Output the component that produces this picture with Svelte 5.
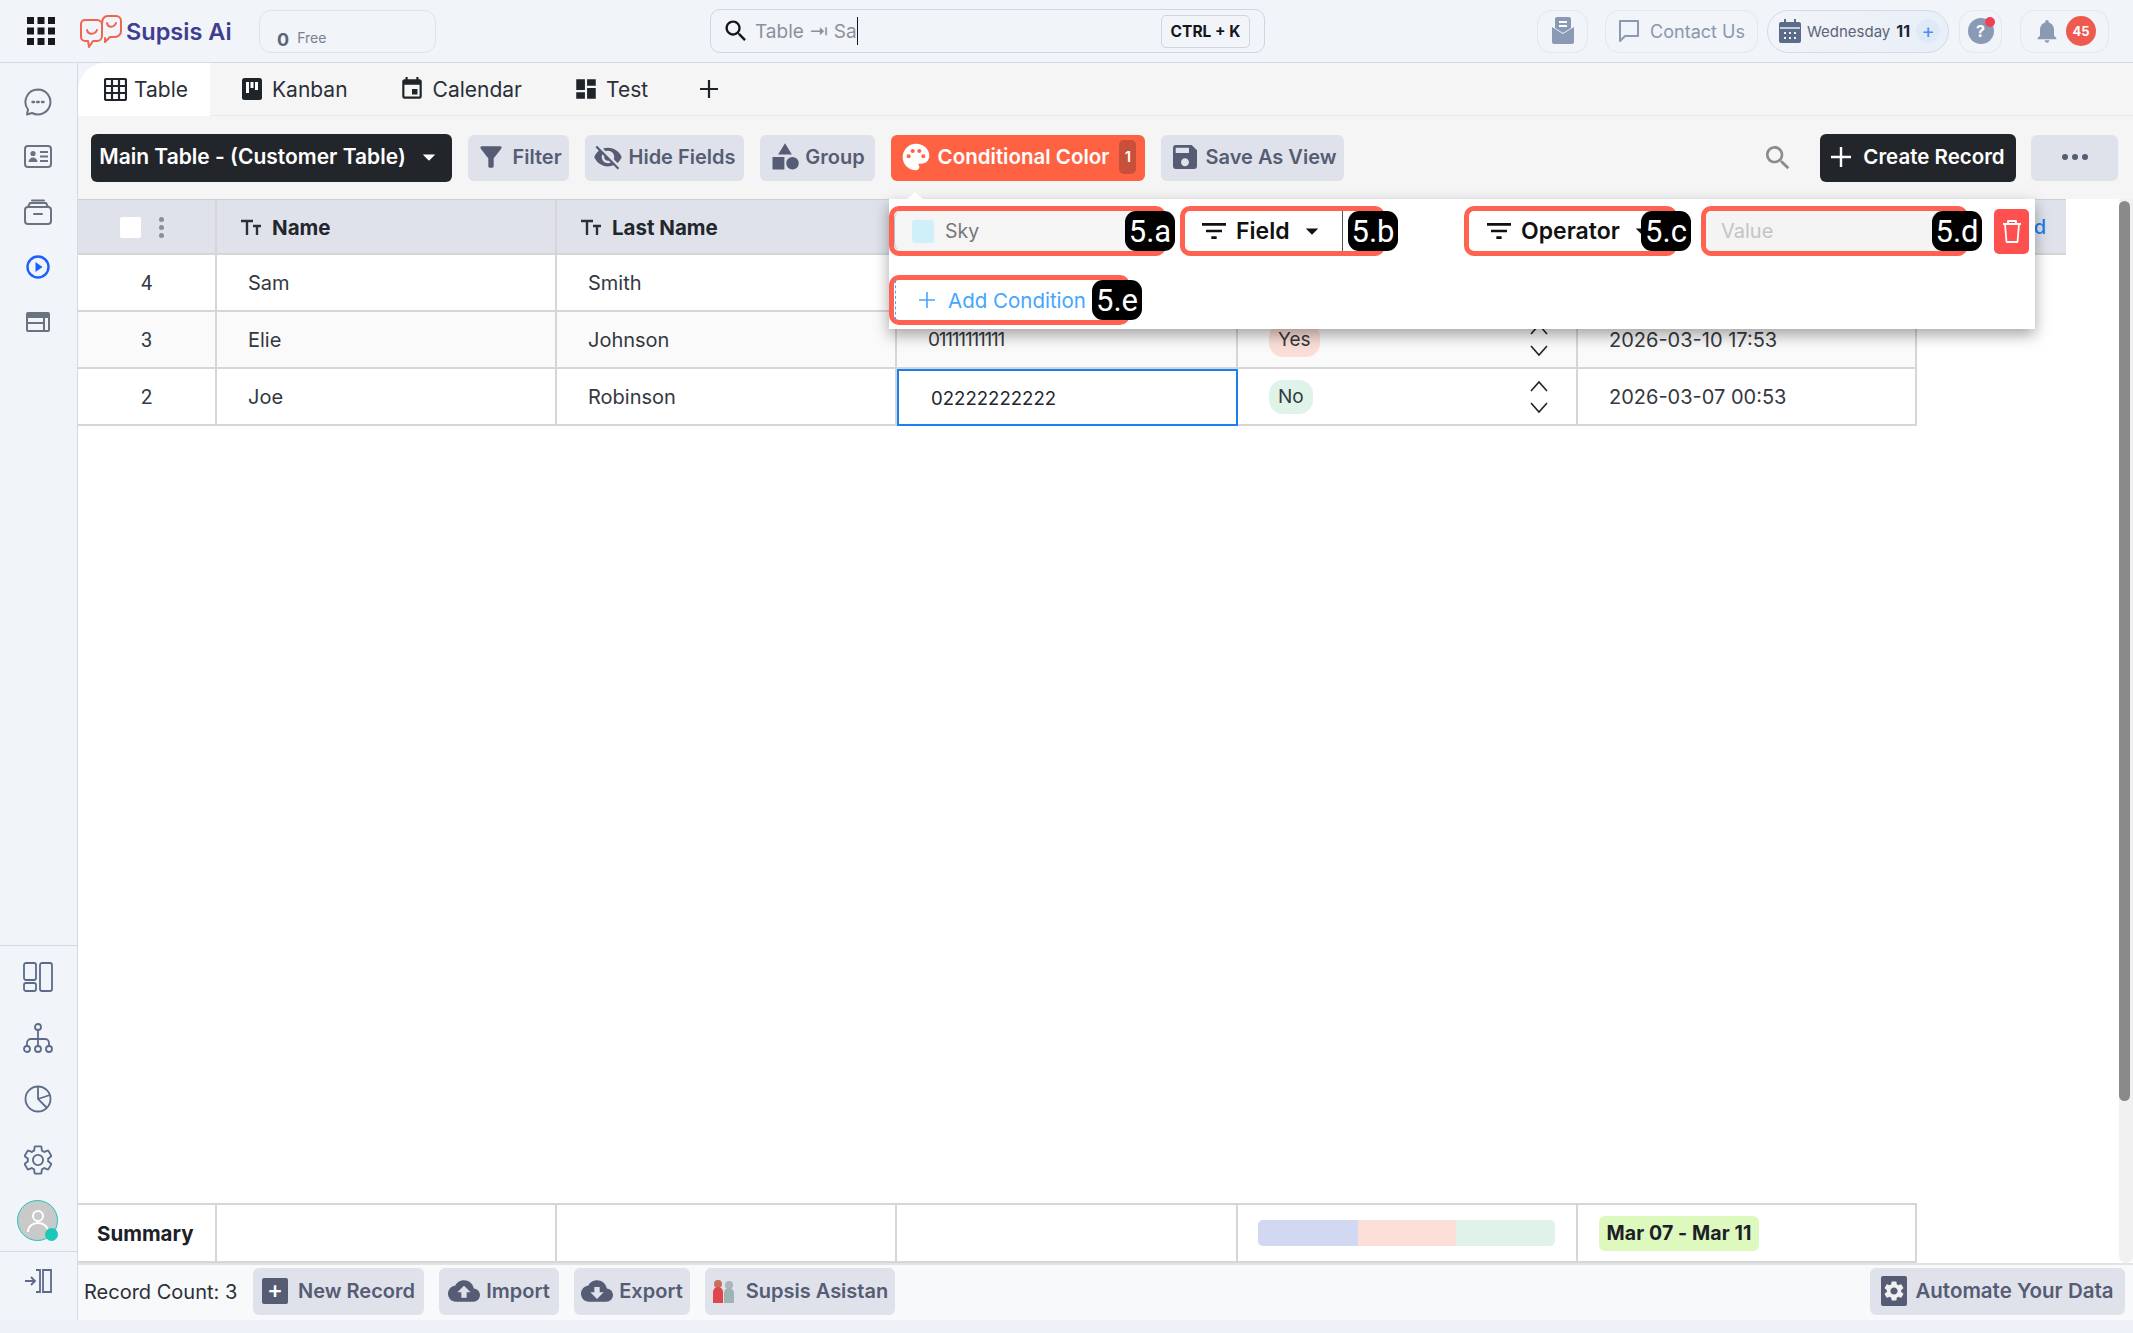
<script>
  const paths = {
    search: 'M15.5 14h-.79l-.28-.27C15.41 12.59 16 11.11 16 9.5 16 5.91 13.09 3 9.5 3S3 5.91 3 9.5 5.91 16 9.5 16c1.61 0 3.09-.59 4.23-1.57l.27.28v.79l5 4.99L20.49 19l-4.99-5zm-6 0C7.01 14 5 11.99 5 9.5S7.01 5 9.5 5 14 7.01 14 9.5 11.99 14 9.5 14z',
    caret: 'M7 10l5 5 5-5z',
    filterAlt: 'M4.25 5.61C6.27 8.2 10 13 10 13v6c0 .55.45 1 1 1h2c.55 0 1-.45 1-1v-6s3.72-4.8 5.74-7.39c.51-.66.04-1.61-.79-1.61H5.04c-.83 0-1.3.95-.79 1.61z',
    eyeOff: 'M12 7c2.76 0 5 2.24 5 5 0 .65-.13 1.26-.36 1.83l2.92 2.92c1.51-1.26 2.7-2.89 3.43-4.75-1.73-4.39-6-7.5-11-7.5-1.4 0-2.74.25-3.98.7l2.16 2.16C10.74 7.13 11.35 7 12 7zM2 4.27l2.28 2.28.46.46C3.08 8.3 1.78 10.02 1 12c1.73 4.39 6 7.5 11 7.5 1.55 0 3.03-.3 4.38-.84l.42.42L19.73 22 21 20.73 3.27 3 2 4.27zM7.53 9.8l1.55 1.55c-.05.21-.08.43-.08.65 0 1.66 1.34 3 3 3 .22 0 .44-.03.65-.08l1.55 1.55c-.67.33-1.41.53-2.2.53-2.76 0-5-2.24-5-5 0-.79.2-1.53.53-2.2z',
    shapes: 'M12 1l5.5 9h-11zM2 12h9.5v10H2zM18 12a5 5 0 1 1 0 10 5 5 0 0 1 0-10z',
    palette: 'M12 2C6.49 2 2 6.49 2 12s4.49 10 10 10c1.38 0 2.5-1.12 2.5-2.5 0-.61-.23-1.2-.64-1.67-.08-.1-.13-.21-.13-.33 0-.28.22-.5.5-.5H16c3.31 0 6-2.69 6-6 0-4.96-4.49-9-10-9zm-5.5 11c-.83 0-1.5-.67-1.5-1.5S5.67 10 6.5 10s1.5.67 1.5 1.5S7.33 13 6.5 13zm3-4C8.67 9 8 8.33 8 7.5S8.67 6 9.5 6s1.5.67 1.5 1.5S10.33 9 9.5 9zm5 0c-.83 0-1.5-.67-1.5-1.5S13.67 6 14.5 6s1.5.67 1.5 1.5S15.33 9 14.5 9zm3 4c-.83 0-1.5-.67-1.5-1.5s.67-1.5 1.5-1.5 1.5.67 1.5 1.5-.67 1.5-1.5 1.5z',
    save: 'M17 3H5c-1.11 0-2 .9-2 2v14c0 1.1.89 2 2 2h14c1.1 0 2-.9 2-2V7l-4-4zm-5 16c-1.66 0-3-1.34-3-3s1.34-3 3-3 3 1.34 3 3-1.34 3-3 3zm3-10H5V5h10v4z',
    filterList: 'M10 18h4v-2h-4v2zM3 6v2h18V6H3zm3 7h12v-2H6v2z',
    event: 'M17 12h-5v5h5v-5zM16 1v2H8V1H6v2H5c-1.11 0-1.99.9-1.99 2L3 19c0 1.1.89 2 2 2h14c1.1 0 2-.9 2-2V5c0-1.1-.9-2-2-2h-1V1h-2zm3 18H5V8h14v11z',
    dashboard: 'M3 13h8V3H3v10zm0 8h8v-6H3v6zm10 0h8V11h-8v10zm0-18v6h8V3h-8z',
    upload: 'M19.35 10.04C18.67 6.59 15.64 4 12 4 9.11 4 6.6 5.64 5.35 8.04 2.34 8.36 0 10.91 0 14c0 3.31 2.69 6 6 6h13c2.76 0 5-2.24 5-5 0-2.64-2.05-4.78-4.65-4.96zM14 13v4h-4v-4H7l5-5 5 5h-3z',
    download: 'M19.35 10.04C18.67 6.59 15.64 4 12 4 9.11 4 6.6 5.64 5.35 8.04 2.34 8.36 0 10.91 0 14c0 3.31 2.69 6 6 6h13c2.76 0 5-2.24 5-5 0-2.64-2.05-4.78-4.65-4.96zM17 13l-5 5-5-5h3V9h4v4h3z',
    bell: 'M12 22c1.1 0 2-.9 2-2h-4c0 1.1.9 2 2 2zm6-6v-5c0-3.07-1.63-5.64-4.5-6.32V4c0-.83-.67-1.5-1.5-1.5s-1.5.67-1.5 1.5v.68C7.64 5.36 6 7.92 6 11v5l-2 2v1h16v-1l-2-2z',
    gear: 'M19.14 12.94c.04-.3.06-.61.06-.94 0-.32-.02-.64-.07-.94l2.03-1.58c.18-.14.23-.41.12-.61l-1.92-3.32c-.12-.22-.37-.29-.59-.22l-2.39.96c-.5-.38-1.03-.7-1.62-.94l-.36-2.54c-.04-.24-.24-.41-.48-.41h-3.84c-.24 0-.43.17-.47.41l-.36 2.54c-.59.24-1.13.57-1.62.94l-2.39-.96c-.22-.08-.47 0-.59.22L2.74 8.87c-.12.21-.08.47.12.61l2.03 1.58c-.05.3-.09.63-.09.94s.02.64.07.94l-2.03 1.58c-.18.14-.23.41-.12.61l1.92 3.32c.12.22.37.29.59.22l2.39-.96c.5.38 1.03.7 1.62.94l.36 2.54c.05.24.24.41.48.41h3.84c.24 0 .44-.17.47-.41l.36-2.54c.59-.24 1.13-.56 1.62-.94l2.39.96c.22.08.47 0 .59-.22l1.92-3.32c.12-.22.07-.47-.12-.61l-2.01-1.58zM12 15.6c-1.98 0-3.6-1.62-3.6-3.6s1.62-3.6 3.6-3.6 3.6 1.62 3.6 3.6-1.62 3.6-3.6 3.6z'
  };

  const rows = [
    { id: 4, name: 'Sam', last: 'Smith', phone: '', choice: '', date: '' },
    { id: 3, name: 'Elie', last: 'Johnson', phone: '01111111111', choice: 'Yes', date: '2026-03-10 17:53' },
    { id: 2, name: 'Joe', last: 'Robinson', phone: '02222222222', choice: 'No', date: '2026-03-07 00:53' }
  ];
</script>

{#snippet icon(d, size = 24)}
  <svg class="ico" width={size} height={size} viewBox="0 0 24 24" fill="currentColor"><path {d} /></svg>
{/snippet}

{#snippet typeIcon()}
  <svg class="type-ico" width="22" height="20" viewBox="0 0 22 20" fill="none" stroke="currentColor" stroke-width="2.4">
    <path d="M1 3h12M7 3v14M13 8h8M17 8v9" />
  </svg>
{/snippet}

<div class="app">
  <header class="topbar">
    <svg class="apps" width="28" height="28" viewBox="0 0 28 28" fill="#16181d">
      {#each [0, 10.5, 21] as y}
        {#each [0, 10.5, 21] as x}
          <rect {x} {y} width="7" height="7" />
        {/each}
      {/each}
    </svg>
    <div class="logo">
      <svg width="44" height="34" viewBox="0 0 44 34" fill="none" stroke="#f0654f" stroke-width="2" stroke-linecap="round" stroke-linejoin="round">
        <path d="M6 6h12a5 5 0 0 1 5 5v11a5 5 0 0 1-5 5h-4l-4 6-1-6H6a4 4 0 0 1-4-4V10a4 4 0 0 1 4-4z" />
        <path d="M23 10c0-5 2-8 6-8h8a5 5 0 0 1 5 5v10a6 6 0 0 1-6 6h-5l-5 5v-4" />
        <path d="M8 16c1 5 8 5 10 0M28 9c1 5 7 5 9 0" />
      </svg>
      <span class="logo-text">Supsis Ai</span>
    </div>
    <div class="credit"><b>0</b><span>Free</span></div>
    <div class="search">
      <span class="search-ico">{@render icon(paths.search, 28)}</span>
      <span class="search-text">Table ⇥ Sa</span><span class="caret-line"></span>
      <span class="kbd">CTRL + K</span>
    </div>
    <div class="top-right">
      <div class="chip mail">
        <svg width="26" height="30" viewBox="0 0 26 30" fill="#8a9ab5">
          <path d="M7 1h12a2 2 0 0 1 2 2v9l-8 5-8-5V3a2 2 0 0 1 2-2z" />
          <path d="M2 11l11 7 11-7v15a2 2 0 0 1-2 2H4a2 2 0 0 1-2-2z" />
          <path d="M9 6h8M9 10h8" stroke="#fff" stroke-width="2" />
        </svg>
      </div>
      <div class="chip contact">
        <svg width="22" height="24" viewBox="0 0 22 24" fill="none" stroke="#8a9ab5" stroke-width="2"><path d="M2 2h18v15H7l-5 5z" stroke-linejoin="round" /></svg>
        <span>Contact Us</span>
      </div>
      <div class="chip day">
        <svg width="22" height="26" viewBox="0 0 22 26" fill="#5d6b8a">
          <path d="M5 1h2v3h8V1h2v3h3a2 2 0 0 1 2 2v17a2 2 0 0 1-2 2H2a2 2 0 0 1-2-2V6a2 2 0 0 1 2-2h3z" />
          <path d="M1 10h20" stroke="#edf1f8" stroke-width="1.5" />
          <path d="M5 14h2v2H5zM10 14h2v2h-2zM15 14h2v2h-2zM5 19h2v2H5zM10 19h2v2h-2zM15 19h2v2h-2z" fill="#edf1f8" />
        </svg>
        <span class="day-name">Wednesday</span><b>11</b>
        <span class="day-plus">+</span>
      </div>
      <div class="chip help">
        <span class="help-ico">?</span><span class="help-dot"></span>
      </div>
      <div class="chip bell">
        <span class="bell-ico">{@render icon(paths.bell, 28)}</span>
        <span class="count">45</span>
      </div>
    </div>
  </header>

  <div class="body">
    <aside class="sidebar">
      <nav class="side-top">
        <div class="side-item">
          <svg width="28" height="28" viewBox="0 0 28 28" fill="none" stroke="#6b7280" stroke-width="2">
            <path d="M14 1.5a12.5 12.5 0 1 1-6 23.5l-5 1.5 1-5A12.5 12.5 0 0 1 14 1.5z" stroke-linejoin="round" />
            <path d="M8.5 14h1.5M13.2 14h1.5M18 14h1.5" stroke-width="2.4" stroke-linecap="round" />
          </svg>
        </div>
        <div class="side-item">
          <svg width="28" height="23" viewBox="0 0 28 23" fill="none" stroke="#6b7280" stroke-width="2">
            <rect x="1" y="1" width="26" height="21" rx="3" />
            <circle cx="9" cy="8.5" r="2.6" fill="#6b7280" stroke="none" />
            <path d="M4.5 17c.4-6 8.6-6 9 0z" fill="#6b7280" stroke="none" />
            <path d="M16 7h8M16 11.5h8M16 16h8" />
          </svg>
        </div>
        <div class="side-item">
          <svg width="28" height="26" viewBox="0 0 28 26" fill="none" stroke="#6b7280" stroke-width="2">
            <rect x="1" y="8" width="26" height="17" rx="3" />
            <path d="M4 8l2-4h16l2 4M8 1.5h12M10 15h8" stroke-linecap="round" />
          </svg>
        </div>
        <div class="side-item">
          <svg width="24" height="24" viewBox="0 0 24 24" fill="none" stroke="#1a5fff" stroke-width="2.4">
            <circle cx="12" cy="12" r="10.5" />
            <path d="M9.5 7l7 5-7 5z" fill="#1a5fff" stroke="none" />
          </svg>
        </div>
        <div class="side-item">
          <svg width="24" height="20" viewBox="0 0 24 20" fill="#6b7280">
            <path fill-rule="evenodd" d="M2 0h20a2 2 0 0 1 2 2v16a2 2 0 0 1-2 2H2a2 2 0 0 1-2-2V2a2 2 0 0 1 2-2zm0 6v4h15V6zm0 6v6h15v-6zm17-6v12h3V6z" />
          </svg>
        </div>
      </nav>
      <div class="side-bottom">
        <div class="side-item tall">
          <svg width="30" height="30" viewBox="0 0 30 30" fill="none" stroke="#5d6b8a" stroke-width="1.8">
            <rect x="1" y="1" width="12" height="17" rx="2" />
            <rect x="1" y="21" width="12" height="8" rx="2" />
            <rect x="17" y="1" width="12" height="28" rx="2" />
          </svg>
        </div>
        <div class="side-item tall">
          <svg width="30" height="30" viewBox="0 0 30 30" fill="none" stroke="#5d6b8a" stroke-width="1.8">
            <circle cx="15" cy="4" r="3" />
            <circle cx="4" cy="26" r="3" />
            <circle cx="15" cy="26" r="3" />
            <circle cx="26" cy="26" r="3" />
            <path d="M15 7v16M4 23v-3a4 4 0 0 1 4-4h14a4 4 0 0 1 4 4v3" />
          </svg>
        </div>
        <div class="side-item tall">
          <svg width="28" height="28" viewBox="0 0 28 28" fill="none" stroke="#5d6b8a" stroke-width="1.8">
            <circle cx="14" cy="14" r="12.5" />
            <path d="M14 1.5V14l9 9M14 14l12-4" />
          </svg>
        </div>
        <div class="side-item tall gear">
          <svg width="34" height="34" viewBox="0 0 24 24" fill="none" stroke="#5d6b8a" stroke-width="1.3"><path d={paths.gear} /></svg>
        </div>
        <div class="side-item tall">
          <div class="avatar">
            <svg width="22" height="24" viewBox="0 0 22 24" fill="none" stroke="#fff" stroke-width="2"><circle cx="11" cy="7" r="5" /><path d="M1 23c0-12 20-12 20 0" /></svg>
            <span class="online"></span>
          </div>
        </div>
        <div class="side-exit">
          <svg width="28" height="24" viewBox="0 0 28 24" fill="none" stroke="#5d6b8a" stroke-width="1.8">
            <path d="M1 12h9M7 8l4 4-4 4M12 1h4v22h-4M19 1h8v22h-8z" />
          </svg>
        </div>
      </div>
    </aside>

    <main class="main">
      <div class="tabs">
        <div class="tab active">
          <svg width="23" height="23" viewBox="0 0 23 23" fill="none" stroke="#1f232a" stroke-width="2.2"><rect x="1" y="1" width="21" height="21" rx="1.5" /><path d="M8 1v21M15 1v21M1 8h21M1 15h21" /></svg>
          <span>Table</span>
        </div>
        <div class="tab">
          <svg width="20" height="22" viewBox="0 0 20 22" fill="#1f232a"><rect width="20" height="22" rx="2.5" /><path d="M4 4h3v11H4zM8.5 4h3v6h-3zM13 4h3v8h-3z" fill="#fff" /></svg>
          <span>Kanban</span>
        </div>
        <div class="tab">
          <span class="tab-ico">{@render icon(paths.event, 26)}</span>
          <span>Calendar</span>
        </div>
        <div class="tab">
          <span class="tab-ico">{@render icon(paths.dashboard, 26)}</span>
          <span>Test</span>
        </div>
        <svg class="tab-add" width="18" height="18" viewBox="0 0 18 18" stroke="#1f232a" stroke-width="2.2"><path d="M9 0v18M0 9h18" /></svg>
      </div>

      <div class="toolbar">
        <button class="btn dark main-table"><span>Main Table - (Customer Table)</span>{@render icon(paths.caret, 30)}</button>
        <button class="btn filter">{@render icon(paths.filterAlt, 32)}<span>Filter</span></button>
        <button class="btn hide">{@render icon(paths.eyeOff, 30)}<span>Hide Fields</span></button>
        <button class="btn group">{@render icon(paths.shapes, 30)}<span>Group</span></button>
        <button class="btn accent">{@render icon(paths.palette, 32)}<span>Conditional Color</span><i class="badge">1</i></button>
        <button class="btn save">{@render icon(paths.save, 32)}<span>Save As View</span></button>
        <span class="tool-search">{@render icon(paths.search, 32)}</span>
        <button class="btn dark create">
          <svg width="20" height="20" viewBox="0 0 20 20" stroke="#fff" stroke-width="2.4"><path d="M10 0v20M0 10h20" /></svg>
          <span>Create Record</span>
        </button>
        <button class="btn more"><i></i><i></i><i></i></button>
      </div>

      <div class="content">
        <div class="sheet">
          <div class="row head">
            <div class="cell check"><span class="box"></span><span class="kebab"><i></i><i></i><i></i></span></div>
            <div class="cell">{@render typeIcon()}Name</div>
            <div class="cell">{@render typeIcon()}Last Name</div>
            <div class="cell"></div>
            <div class="cell"></div>
            <div class="cell"></div>
            <div class="cell add-field">Add Field</div>
          </div>
          {#each rows as r, i}
            <div class="row data" class:alt={i === 1}>
              <div class="cell num">{r.id}</div>
              <div class="cell">{r.name}</div>
              <div class="cell">{r.last}</div>
              <div class="cell" class:selected={i === 2} class:tight={i === 1}>{r.phone}</div>
              <div class="cell pick">
                {#if r.choice}
                  <span class="pill" class:no={r.choice === 'No'}>{r.choice}</span>
                  <svg class="updown" width="20" height="36" viewBox="0 0 20 36" fill="none" stroke="#222" stroke-width="1.6"><path d="M2 12l8-9 8 9M2 24l8 9 8-9" /></svg>
                {/if}
              </div>
              <div class="cell">{r.date}</div>
            </div>
          {/each}
          <div class="spacer"></div>
          <div class="row summary">
            <div class="cell sum-label">Summary</div>
            <div class="cell"></div>
            <div class="cell"></div>
            <div class="cell"></div>
            <div class="cell"><div class="bar"><i class="b1"></i><i class="b2"></i><i class="b3"></i></div></div>
            <div class="cell"><span class="range">Mar 07 - Mar 11</span></div>
          </div>
        </div>
        <div class="scrollbar"><span class="thumb"></span></div>
      </div>

      <footer class="footer">
        <span class="record-count">Record Count: 3</span>
        <button class="btn foot new">
          <span class="plus-box">+</span><span>New Record</span>
        </button>
        <button class="btn foot import">{@render icon(paths.upload, 32)}<span>Import</span></button>
        <button class="btn foot export">{@render icon(paths.download, 32)}<span>Export</span></button>
        <button class="btn foot asistan">
          <svg width="24" height="28" viewBox="0 0 24 28">
            <circle cx="6" cy="7" r="4" fill="#c9705c" />
            <path d="M1 26V15a5 5 0 0 1 10 0v11z" fill="#e0474c" />
            <circle cx="17" cy="8" r="4" fill="#aab4bd" />
            <path d="M12 26V16a5 5 0 0 1 10 0v10z" fill="#9fb3b5" />
          </svg>
          <span>Supsis Asistan</span>
        </button>
        <button class="btn foot automate">
          <span class="gear-box">{@render icon(paths.gear, 24)}</span><span>Automate Your Data</span>
        </button>
      </footer>

      <!-- conditional color popover, sits over the table -->
      <div class="popover">
        <span class="arrow"></span>
        <div class="pop-row">
          <div class="mark w-a">
            <div class="color-input"><span class="swatch"></span><span>Sky</span></div>
            <span class="tag">5.a</span>
          </div>
          <div class="mark w-b">
            <div class="select field">{@render icon(paths.filterList, 32)}<span>Field</span>{@render icon(paths.caret, 30)}</div>
            <span class="tag">5.b</span>
          </div>
          <div class="mark w-c">
            <div class="select">{@render icon(paths.filterList, 32)}<span>Operator</span>{@render icon(paths.caret, 30)}</div>
            <span class="tag">5.c</span>
          </div>
          <div class="mark w-d">
            <div class="value">Value</div>
            <span class="tag">5.d</span>
          </div>
          <button class="trash">
            <svg width="20" height="24" viewBox="0 0 20 24" fill="none" stroke="#fff" stroke-width="1.8"><path d="M1 5h18M6 5V2h8v3M3 5l1.5 18h11L17 5" stroke-linejoin="round" /></svg>
          </button>
        </div>
        <div class="mark w-e">
          <div class="add-cond">
            <svg width="16" height="16" viewBox="0 0 16 16" stroke="#45a5ff" stroke-width="1.6"><path d="M8 0v16M0 8h16" /></svg>
            <span>Add Condition</span>
          </div>
          <span class="tag">5.e</span>
        </div>
      </div>
    </main>
  </div>
</div>

<style>
  :global(body) {
    margin: 0;
    background: #eef0f7;
  }

  .app {
    height: 1333px;
    width: 2133px;
    overflow: hidden;
    font-family: Inter, "Noto Sans", sans-serif;
    color: #2b2f38;
    background: #eef0f7;
  }

  .ico {
    display: block;
    flex-shrink: 0;
  }

  button {
    font: inherit;
    border: none;
    cursor: pointer;
  }

  .topbar {
    height: 63px;
    box-sizing: border-box;
    background: #f1f4f8;
    border-bottom: 1px solid #d3dae3;
    display: flex;
    align-items: center;
    padding-left: 27px;
  }

  .apps {
    flex-shrink: 0;
  }

  .logo {
    display: flex;
    align-items: center;
    margin-left: 24px;
    gap: 3px;
    width: 180px;
    flex-shrink: 0;
  }

  .logo-text {
    font-size: 23.5px;
    font-weight: 600;
    color: #3f3d8f;
    white-space: nowrap;
  }

  .credit {
    width: 177px;
    height: 43px;
    box-sizing: border-box;
    border: 1px solid #dfe3ea;
    border-radius: 12px;
    padding: 13px 0 0 17px;
    display: flex;
    gap: 8px;
    align-items: center;
  }

  .credit b {
    font-size: 18px;
    color: #5d6478;
    margin-top: 4px;
  }

  .credit span {
    font-size: 14px;
    color: #7a818f;
  }

  .search {
    width: 555px;
    height: 44px;
    box-sizing: border-box;
    margin-left: 274px;
    border: 1px solid #cfd6e0;
    border-radius: 10px;
    display: flex;
    align-items: center;
    padding-left: 11px;
  }

  .search-ico {
    color: #14161a;
  }

  .search-text {
    margin-left: 5px;
    font-size: 19px;
    color: #8b919c;
  }

  .caret-line {
    width: 1px;
    height: 28px;
    background: #14161a;
    margin-left: 0;
  }

  .kbd {
    margin-left: auto;
    margin-right: 14px;
    width: 89px;
    height: 33px;
    box-sizing: border-box;
    border: 1px solid #cfd6e0;
    border-radius: 5px;
    font-size: 15.5px;
    font-weight: 700;
    color: #14161a;
    display: flex;
    align-items: center;
    justify-content: center;
    white-space: nowrap;
  }

  .top-right {
    display: flex;
    align-items: center;
    margin-left: 272px;
  }

  .chip {
    height: 43px;
    box-sizing: border-box;
    border: 1px solid #e3e8ef;
    border-radius: 14px;
    display: flex;
    align-items: center;
    justify-content: center;
    position: relative;
  }

  .mail {
    width: 51px;
  }

  .contact {
    width: 153px;
    margin-left: 17px;
    gap: 10px;
    font-size: 18px;
    color: #8a97ad;
  }

  .day {
    width: 182px;
    margin-left: 9px;
    border-radius: 22px;
    border-color: #d3dae6;
    background: linear-gradient(90deg, #f1f4f8, #e9eff8);
    font-size: 15px;
    color: #5b6478;
    justify-content: flex-start;
    padding-left: 11px;
    gap: 6px;
  }

  .day b {
    color: #1d2230;
    font-size: 16px;
  }

  .day-plus {
    width: 24px;
    height: 24px;
    border-radius: 50%;
    background: #dfe9f8;
    color: #4a8ef0;
    font-size: 20px;
    display: flex;
    align-items: center;
    justify-content: center;
    margin-left: 0;
  }

  .help {
    width: 43px;
    margin-left: 10px;
  }

  .help-ico {
    width: 26px;
    height: 26px;
    border-radius: 50%;
    background: #8a9ab5;
    color: #fff;
    font-size: 16px;
    font-weight: 700;
    display: flex;
    align-items: center;
    justify-content: center;
  }

  .help-dot {
    position: absolute;
    right: 6px;
    top: 6px;
    width: 10px;
    height: 10px;
    border-radius: 50%;
    background: #ef4056;
  }

  .bell {
    width: 89px;
    margin-left: 18px;
    gap: 5px;
  }

  .bell-ico {
    color: #8a9ab5;
  }

  .count {
    width: 30px;
    height: 30px;
    border-radius: 50%;
    background: #ef5a50;
    color: #fff;
    font-size: 13px;
    font-weight: 700;
    display: flex;
    align-items: center;
    justify-content: center;
  }

  .body {
    height: 1257px;
    display: flex;
    background: #f1f4f8;
  }

  .sidebar {
    width: 78px;
    flex-shrink: 0;
    box-sizing: border-box;
    border-right: 1px solid #d3dae3;
    display: flex;
    flex-direction: column;
    justify-content: space-between;
    padding-bottom: 2px;
  }

  .side-top {
    padding-top: 11px;
  }

  .side-item {
    height: 55px;
    display: flex;
    align-items: center;
    justify-content: center;
    padding-right: 2px;
  }

  .side-item.tall {
    height: 61px;
  }

  .side-bottom {
    border-top: 1px solid #d3dae3;
  }

  .side-exit {
    height: 67px;
    box-sizing: border-box;
    border-top: 1px solid #d3dae3;
    display: flex;
    justify-content: center;
    padding: 17px 2px 0 0;
  }

  .avatar {
    width: 41px;
    height: 41px;
    box-sizing: border-box;
    border: 1px solid #1cc8bb;
    border-radius: 50%;
    background: #c9c9c9;
    display: flex;
    align-items: center;
    justify-content: center;
    position: relative;
  }

  .online {
    position: absolute;
    right: -1px;
    bottom: -1px;
    width: 13px;
    height: 13px;
    border-radius: 50%;
    background: #1cc8bb;
  }

  .main {
    flex: 1;
    min-width: 0;
    position: relative;
    display: flex;
    flex-direction: column;
    background: #fff;
    border-top-left-radius: 28px;
  }

  .tabs {
    height: 53px;
    box-sizing: border-box;
    flex-shrink: 0;
    background: #f5f5f5;
    border-bottom: 1px solid #e9e9e9;
    border-top-left-radius: 28px;
    display: flex;
    align-items: stretch;
  }

  .tab {
    display: flex;
    align-items: center;
    gap: 8px;
    font-size: 21px;
    color: #2b2f38;
    margin-right: 45px;
    padding-left: 6px;
  }

  .tab:nth-child(2) {
    margin-left: 26px;
    gap: 10px;
  }

  .tab:nth-child(4) {
    margin-right: 28px;
    gap: 7px;
  }

  .tab.active {
    width: 132px;
    box-sizing: border-box;
    background: #fff;
    padding-left: 26px;
    gap: 7px;
    margin: 0 0 -1px 0;
    border-top-left-radius: 28px;
  }

  .tab-ico {
    color: #1f232a;
  }

  .tab-add {
    align-self: center;
    margin-left: 24px;
  }

  .toolbar {
    height: 83px;
    flex-shrink: 0;
    box-sizing: border-box;
    background: #f5f5f5;
    display: flex;
    align-items: center;
    padding: 0 15px 0 13px;
    gap: 16px;
  }

  .btn {
    height: 46px;
    box-sizing: border-box;
    border-radius: 6px;
    background: #dfe2ea;
    color: #555c74;
    font-size: 20px;
    font-weight: 600;
    display: flex;
    align-items: center;
    justify-content: center;
    gap: 5px;
    padding: 0 0 2px 0;
    white-space: nowrap;
  }

  .btn.dark {
    height: 48px;
    background: #22262b;
    color: #fff;
  }

  .main-table {
    width: 361px;
    gap: 8px;
    font-size: 21px;
  }

  .filter {
    width: 101px;
  }

  .hide {
    width: 159px;
  }

  .group {
    width: 115px;
  }

  .accent {
    width: 254px;
    background: #ff6243;
    color: #fff;
    gap: 6px;
    font-size: 20.5px;
  }

  .badge {
    font-style: normal;
    width: 17px;
    height: 34px;
    border-radius: 5px;
    background: #c84f38;
    font-size: 15px;
    display: flex;
    align-items: center;
    justify-content: center;
    margin-left: 4px;
  }

  .save {
    width: 183px;
  }

  .tool-search {
    margin-left: auto;
    color: #8b8b8b;
    margin-right: 10px;
  }

  .create {
    width: 196px;
    gap: 12px;
    font-size: 20.5px;
  }

  .more {
    width: 87px;
    gap: 4px;
    margin-left: -1px;
  }

  .more i {
    width: 6px;
    height: 6px;
    border-radius: 50%;
    background: #555c74;
  }

  .content {
    flex: 1;
    min-height: 0;
    display: flex;
    background: #fff;
  }

  .sheet {
    flex: 1;
    display: flex;
    flex-direction: column;
    min-width: 0;
    border-top: 1px solid #cfcfcf;
    margin-right: 53px;
  }

  .row {
    display: grid;
    grid-template-columns: 139px 340px 340px 341px 340px 339px;
    flex-shrink: 0;
  }

  .row.head {
    grid-template-columns: 139px 340px 340px 341px 340px 339px 149px;
    height: 55px;
    background: #dfe2ea;
    font-size: 20.5px;
    font-weight: 700;
    color: #23262d;
  }

  .row.data {
    height: 57px;
    font-size: 20px;
    color: #34383f;
    width: 1839px;
  }

  .row.alt {
    background: #fafafa;
  }

  .cell {
    box-sizing: border-box;
    border-right: 2px solid #d6d6d6;
    border-bottom: 2px solid #d6d6d6;
    display: flex;
    align-items: center;
    padding-left: 31px;
    white-space: nowrap;
  }

  .head .cell {
    padding: 2px 0 0 23px;
    gap: 10px;
  }

  .head .cell.check {
    padding-left: 42px;
    gap: 18px;
  }

  .head .cell.add-field {
    border-right: none;
    color: #1a7ff0;
    font-weight: 500;
    justify-content: flex-end;
    padding: 0 20px 0 0;
    font-size: 20px;
  }

  .type-ico {
    color: #2b2f38;
    flex-shrink: 0;
  }

  .box {
    width: 21px;
    height: 21px;
    background: #fff;
    border-radius: 2px;
  }

  .kebab {
    display: flex;
    flex-direction: column;
    gap: 3px;
  }

  .kebab i {
    width: 5px;
    height: 5px;
    border-radius: 50%;
    background: #8a8e9a;
  }

  .cell.num {
    justify-content: center;
    padding: 0;
    font-family: Roboto, sans-serif;
    font-size: 20px;
  }

  .cell.selected {
    border: 2px solid #1a7ff0;
    padding-left: 32px;
    color: #23262d;
    font-size: 18.6px;
  }

  .cell.tight {
    letter-spacing: -1.2px;
    font-size: 19px;
  }

  .cell.pick {
    position: relative;
  }

  .pill {
    background: #fbded7;
    border-radius: 14px;
    padding: 5px 9px;
    line-height: 24px;
    font-size: 19px;
  }

  .pill.no {
    background: #dff3e8;
  }

  .updown {
    position: absolute;
    right: 27px;
    top: 10px;
  }

  .spacer {
    flex: 1;
  }

  .row.summary {
    height: 58px;
    border-top: 2px solid #d6d6d6;
    font-size: 20.5px;
    width: 1839px;
  }

  .sum-label {
    font-weight: 700;
    color: #1d2027;
    padding-left: 19px;
  }

  .bar {
    width: 297px;
    height: 26px;
    margin-left: -11px;
    border-radius: 5px;
    overflow: hidden;
    display: flex;
  }

  .b1 {
    width: 100px;
    background: #d3d8f2;
  }

  .b2 {
    width: 98px;
    background: #fbded7;
  }

  .b3 {
    flex: 1;
    background: #dff3e8;
  }

  .range {
    margin-left: -10px;
    background: #ddf9bd;
    border-radius: 6px;
    height: 35px;
    width: 160px;
    display: flex;
    align-items: center;
    justify-content: center;
    font-weight: 700;
    color: #1d2027;
    font-size: 19.5px;
    letter-spacing: 0.1px;
  }

  .scrollbar {
    width: 14px;
    background: #f1f1f1;
    flex-shrink: 0;
    border-radius: 0 0 7px 7px;
  }

  .thumb {
    display: block;
    width: 11px;
    margin: 2px 0 0 0;
    height: 900px;
    border-radius: 6px;
    background: #8a8a8a;
  }

  .footer {
    height: 57px;
    flex-shrink: 0;
    box-sizing: border-box;
    background: #f8f9fb;
    border-top: 2px solid #e3e3e3;
    display: flex;
    align-items: center;
    padding: 0 8px 2px 6px;
  }

  .record-count {
    font-size: 20px;
    color: #2b2f38;
    width: 169px;
    white-space: nowrap;
  }

  .foot {
    height: 47px;
    gap: 6px;
  }

  .new {
    width: 171px;
    gap: 10px;
  }

  .plus-box {
    width: 26px;
    height: 26px;
    border-radius: 2px;
    background: #555c74;
    color: #fff;
    font-size: 24px;
    font-weight: 500;
    line-height: 24px;
    text-align: center;
  }

  .import {
    width: 120px;
    margin-left: 15px;
  }

  .export {
    width: 116px;
    margin-left: 15px;
  }

  .asistan {
    width: 190px;
    margin-left: 15px;
    gap: 10px;
  }

  .automate {
    width: 255px;
    margin-left: auto;
    gap: 8px;
    font-size: 20.5px;
  }

  .gear-box {
    width: 26px;
    height: 30px;
    border-radius: 2px;
    background: #555c74;
    color: #f0f0f0;
    display: flex;
    align-items: center;
    justify-content: center;
  }

  .popover {
    position: absolute;
    left: 811px;
    top: 136px;
    width: 1146px;
    height: 130px;
    box-sizing: border-box;
    background: #fff;
    padding-top: 7px;
    box-shadow: 0 6px 14px rgba(0, 0, 0, 0.35);
    z-index: 5;
  }

  .arrow {
    position: absolute;
    left: 17px;
    top: -7px;
    width: 0;
    height: 0;
    border-left: 9px solid transparent;
    border-right: 9px solid transparent;
    border-bottom: 8px solid #fff;
  }

  .pop-row {
    display: flex;
    align-items: center;
    height: 50px;
  }

  .mark {
    position: relative;
    box-sizing: border-box;
    height: 50px;
    border: 5px solid #ff6250;
    border-radius: 10px;
    flex-shrink: 0;
  }

  .tag {
    position: absolute;
    top: 0;
    height: 40px;
    width: 50px;
    background: #000;
    color: #fff;
    border-radius: 11px;
    font-family: Roboto, sans-serif;
    font-size: 31px;
    display: flex;
    align-items: center;
    justify-content: center;
  }

  .w-a {
    width: 277px;
  }

  .w-a .tag {
    left: 231px;
  }

  .w-b {
    width: 205px;
    margin-left: 14px;
  }

  .w-b .tag {
    left: 163px;
  }

  .w-c {
    width: 213px;
    margin-left: 79px;
  }

  .w-c .tag {
    left: 172px;
  }

  .w-d {
    width: 267px;
    margin-left: 24px;
  }

  .w-d .tag {
    left: 226px;
  }

  .w-e {
    width: 241px;
    margin-top: 19px;
  }

  .w-e .tag {
    left: 198px;
  }

  .color-input {
    height: 100%;
    background: #f5f5f5;
    border-left: 1px solid #bbb;
    border-radius: 8px;
    display: flex;
    align-items: center;
    gap: 11px;
    padding-left: 17px;
    font-size: 19.5px;
    color: #777;
  }

  .swatch {
    width: 22px;
    height: 23px;
    border-radius: 3px;
    background: #cff0f9;
  }

  .select {
    height: 100%;
    display: flex;
    align-items: center;
    padding-left: 14px;
    gap: 6px;
    font-size: 23px;
    font-weight: 600;
    color: #111;
  }

  .select span {
    margin-right: 1px;
  }

  .select.field {
    width: 158px;
    box-sizing: border-box;
    border-right: 1px solid #555;
    padding-left: 13px;
  }

  .value {
    height: 100%;
    background: #f4f4f4;
    border-radius: 6px;
    display: flex;
    align-items: center;
    padding-left: 15px;
    font-size: 20px;
    color: #c4c4c4;
  }

  .trash {
    width: 35px;
    height: 45px;
    margin-left: 26px;
    border-radius: 5px;
    background: #ff5050;
    display: flex;
    align-items: center;
    justify-content: center;
    padding: 0;
  }

  .add-cond {
    height: 100%;
    border-left: 1px dashed #45a5ff;
    margin-left: 1px;
    display: flex;
    align-items: center;
    padding-left: 23px;
    gap: 13px;
    font-size: 20.5px;
    color: #45a5ff;
    white-space: nowrap;
  }
</style>
